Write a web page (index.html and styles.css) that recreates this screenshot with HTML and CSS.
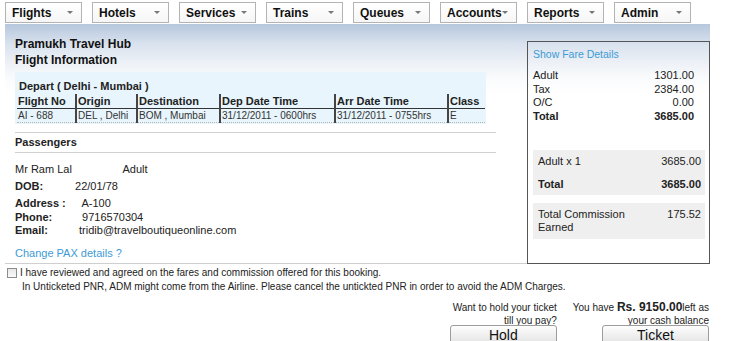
FILE: index.html
```html
<!DOCTYPE html>
<html lang="en">
<head>
    <title>Flight Information</title>
    <link rel="stylesheet" href="styles.css">
</head>
<body>
    <div class="menu-bar">
        <div class="menu-item">Flights <span class="arrow"></span></div>
        <div class="menu-item">Hotels <span class="arrow"></span></div>
        <div class="menu-item">Services <span class="arrow"></span></div>
        <div class="menu-item">Trains <span class="arrow"></span></div>
        <div class="menu-item">Queues <span class="arrow"></span></div>
        <div class="menu-item">Accounts <span class="arrow"></span></div>
        <div class="menu-item">Reports <span class="arrow"></span></div>
        <div class="menu-item">Admin <span class="arrow"></span></div>
    </div>

    <div class="main-panel">
        <div class="info-area">
            <div class="page-title">Pramukh Travel Hub</div>
            <div class="page-title">Flight Information</div>

            <div class="flight-box">
                <div class="flight-route">Depart ( Delhi - Mumbai )</div>
                <table class="flight-table">
                    <colgroup>
                        <col style="width: 59px">
                        <col style="width: 61px">
                        <col style="width: 83px">
                        <col style="width: 115px">
                        <col style="width: 113px">
                        <col style="width: 37px">
                    </colgroup>
                    <tr class="head-row">
                        <th>Flight No</th>
                        <th>Origin</th>
                        <th>Destination</th>
                        <th>Dep Date Time</th>
                        <th>Arr Date Time</th>
                        <th>Class</th>
                    </tr>
                    <tr class="data-row">
                        <td>AI - 688</td>
                        <td>DEL , Delhi</td>
                        <td>BOM , Mumbai</td>
                        <td>31/12/2011 - 0600hrs</td>
                        <td>31/12/2011 - 0755hrs</td>
                        <td>E</td>
                    </tr>
                </table>
            </div>

            <div class="section-head">Passengers</div>

            <div class="pax-line">
                <span class="pax-name">Mr Ram Lal</span>
                <span>Adult</span>
            </div>
            <div class="pax-line dob-line">
                <span class="label label-dob">DOB:</span>
                <span>22/01/78</span>
            </div>
            <div class="contact">
                <div><span class="label label-wide">Address :</span> A-100</div>
                <div><span class="label label-wide">Phone:</span> 9716570304</div>
                <div><span class="label label-email">Email:</span> tridib@travelboutiqueonline.com</div>
            </div>
            <a class="link change-link" href="#">Change PAX details ?</a>
        </div>

        <div class="fare-box">
            <a class="link fare-link" href="#">Show Fare Details</a>
            <div class="fare-list">
                <div class="fare-row"><span>Adult</span><span>1301.00</span></div>
                <div class="fare-row"><span>Tax</span><span>2384.00</span></div>
                <div class="fare-row"><span>O/C</span><span>0.00</span></div>
                <div class="fare-row bold"><span>Total</span><span>3685.00</span></div>
            </div>
            <div class="grey-box">
                <div class="grey-row"><span>Adult x 1</span><span>3685.00</span></div>
                <div class="grey-row bold"><span>Total</span><span>3685.00</span></div>
            </div>
            <div class="grey-box commission">
                <span class="commission-label">Total Commission Earned</span>
                <span>175.52</span>
            </div>
        </div>
    </div>

    <div class="agree-area">
        <div class="agree-line"><span class="check"></span>I have reviewed and agreed on the fares and commission offered for this booking.</div>
        <div class="agree-note">In Unticketed PNR, ADM might come from the Airline. Please cancel the untickted PNR in order to avoid the ADM Charges.</div>
    </div>

    <div class="actions">
        <div class="action">
            <div class="action-text">Want to hold your ticket<br>till you pay?</div>
            <button class="action-button">Hold</button>
        </div>
        <div class="action">
            <div class="action-text">You have <b>Rs. 9150.00</b>left as<br>your cash balance</div>
            <button class="action-button">Ticket</button>
        </div>
    </div>
</body>
</html>
```

FILE: styles.css
```css
* {
    margin: 0;
    padding: 0;
    box-sizing: border-box;
}

body {
    font-family: "Liberation Sans", Arial, sans-serif;
    font-size: 11px;
    color: #222;
    background: #fff;
    width: 750px;
    height: 341px;
    overflow: hidden;
}

.bold {
    font-weight: bold;
}

.link {
    color: #3d9bd6;
    text-decoration: none;
}

/* top menu */
.menu-bar {
    display: flex;
    padding: 2px 0 0 5px;
    height: 24px;
}

.menu-item {
    width: 77px;
    height: 21px;
    margin-right: 10px;
    padding: 0 8px 0 6px;
    border: 1px solid #b3b3b3;
    background: linear-gradient(#fff, #f6f6f6);
    font-size: 12px;
    font-weight: bold;
    color: #111;
    display: flex;
    align-items: center;
    justify-content: space-between;
}

.arrow {
    width: 0;
    height: 0;
    border-left: 3px solid transparent;
    border-right: 3px solid transparent;
    border-top: 3px solid #777;
}

/* main panel */
.main-panel {
    display: flex;
    margin-left: 5px;
    width: 705px;
    background: linear-gradient(#b6c7dd 0px, #d9e2ee 20px, #eef2f7 40px, #fafbfc 55px, #fff 70px);
}

.info-area {
    width: 522px;
    padding: 12px 27px 3px 10px;
    border-bottom: 1px solid #cfcfcf;
}

.page-title {
    font-size: 12px;
    font-weight: bold;
    line-height: 16px;
    color: #111;
}

.flight-box {
    margin-top: 4px;
    width: 471px;
    padding: 7px 0 1px 2px;
    background: #e8f5fc;
}

.flight-route {
    font-size: 11px;
    font-weight: bold;
    line-height: 14px;
    padding-left: 2px;
    margin-bottom: 1px;
}

.flight-table {
    border-collapse: collapse;
    table-layout: fixed;
    width: 468px;
}

.flight-table th {
    text-align: left;
    font-size: 11px;
    line-height: 14px;
    border-bottom: 1px solid #333;
    padding-left: 1px;
}

.flight-table td {
    font-size: 10px;
    line-height: 13px;
    color: #333;
    border-bottom: 1px dotted #b5b5b5;
    padding-left: 1px;
}

.flight-table th + th,
.flight-table td + td {
    border-left: 2px solid #444;
}

.section-head {
    margin-top: 8px;
    width: 481px;
    border-top: 1px solid #d0d0d0;
    border-bottom: 1px solid #d0d0d0;
    padding: 2px 0 3px;
    font-weight: bold;
    line-height: 14px;
}

.pax-line {
    margin-top: 9px;
    line-height: 14px;
}

.dob-line {
    margin-top: 3px;
}

.pax-name {
    display: inline-block;
    width: 105px;
}

.label {
    display: inline-block;
    font-weight: bold;
}

.label-dob {
    width: 57px;
}

.label-wide {
    width: 64px;
}

.label-email {
    width: 61px;
}

.contact {
    margin-top: 4px;
    line-height: 13.5px;
}

.change-link {
    display: block;
    margin-top: 8px;
    line-height: 14px;
}

/* fare summary */
.fare-box {
    width: 183px;
    margin-top: 17px;
    border: 1px solid #555;
    padding: 5px 4px 0 5px;
    line-height: 14px;
}

.fare-link {
    font-size: 10.5px;
}

.fare-list {
    margin-top: 8px;
    padding-right: 11px;
}

.fare-row,
.grey-row {
    display: flex;
    justify-content: space-between;
}

.fare-row {
    line-height: 13.5px;
}

.grey-box {
    background: #efefef;
    padding: 0 4px 0 5px;
}

.fare-list + .grey-box {
    margin-top: 27px;
}

.grey-row {
    line-height: 22.5px;
}

.commission {
    margin-top: 8px;
    padding-top: 5px;
    padding-bottom: 5px;
    line-height: 13px;
    display: flex;
    justify-content: space-between;
    align-items: flex-start;
}

.commission-label {
    width: 95px;
}

/* agreement */
.agree-area {
    padding: 2px 0 0 7px;
    line-height: 14px;
    font-size: 10px;
}

.agree-line {
    display: flex;
    align-items: center;
}

.check {
    width: 10px;
    height: 10px;
    margin-right: 3px;
    border: 1px solid #8c8c8c;
    background: linear-gradient(#e8e8e8, #fafafa);
}

.agree-note {
    padding-left: 15px;
}

/* hold / ticket */
.actions {
    display: flex;
    justify-content: flex-end;
    gap: 16px;
    padding: 7px 41px 0 0;
}

.action {
    display: flex;
    flex-direction: column;
    align-items: flex-end;
}

.action-text {
    text-align: right;
    font-size: 10px;
    line-height: 13px;
}

.action-text b {
    font-size: 12px;
}

.action-button {
    margin-top: -2px;
    width: 107px;
    height: 20px;
    border: 1px solid #9c9c9c;
    border-radius: 3px;
    background: linear-gradient(#fefefe, #e2e2e2);
    font-family: "Liberation Sans", Arial, sans-serif;
    font-size: 14px;
    line-height: 16px;
    color: #111;
}
```
